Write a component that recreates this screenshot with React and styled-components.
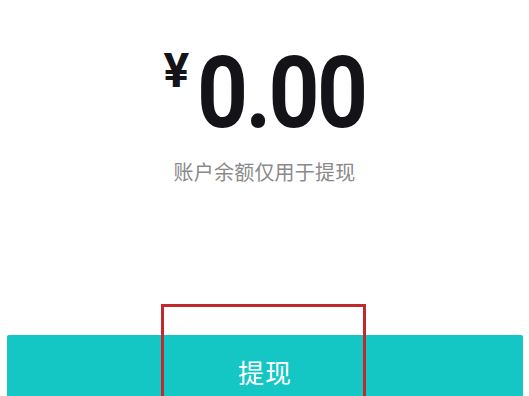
import React from 'react';
import styled, { createGlobalStyle } from 'styled-components';

const GlobalStyle = createGlobalStyle`
  html, body {
    margin: 0;
    padding: 0;
    background: #ffffff;
    overflow: hidden;
  }
  body {
    font-family: "Noto Sans CJK SC", "Noto Sans", sans-serif;
  }
`;

const Page = styled.div`
  width: 529px;
  height: 396px;
  display: flex;
  flex-direction: column;
  align-items: center;
  padding-top: 43px;
  box-sizing: border-box;
`;

const AmountRow = styled.div`
  display: flex;
  align-items: flex-start;
  color: #141418;
  font-family: Roboto, "Liberation Sans", sans-serif;
  font-weight: 700;
`;

const Currency = styled.span`
  font-size: 48px;
  line-height: 1;
  margin-top: 4px;
  margin-right: 8px;
`;

const Amount = styled.span`
  display: inline-block;
  font-size: 100px;
  line-height: 1;
  letter-spacing: -3px;
  transform: scaleX(0.89);
  transform-origin: left center;
  margin-right: -21px;
`;

const Caption = styled.div`
  margin-top: 19px;
  font-size: 20px;
  line-height: 20px;
  color: #8a8a8a;
  letter-spacing: 0.2px;
`;

const ButtonArea = styled.div`
  position: relative;
  align-self: stretch;
  margin: auto 6px 0 7px;
`;

const WithdrawButton = styled.button`
  width: 100%;
  height: 61px;
  border: none;
  border-radius: 2px 2px 0 0;
  background: #14c6c4;
  color: #ffffff;
  font-family: "Noto Sans CJK SC", sans-serif;
  font-size: 26px;
  line-height: 48px;
  letter-spacing: 1px;
  display: flex;
  align-items: flex-start;
  justify-content: center;
  padding: 13px 0 0;
  box-sizing: border-box;
`;

const Highlight = styled.div`
  position: absolute;
  left: 154px;
  top: -31px;
  bottom: 0;
  width: 205px;
  border: 3px solid #bf2a2e;
  border-bottom: none;
  box-sizing: border-box;
  pointer-events: none;
`;

export default function App() {
  return (
    <>
      <GlobalStyle />
      <Page>
        <AmountRow>
          <Currency>¥</Currency>
          <Amount>0.00</Amount>
        </AmountRow>
        <Caption>账户余额仅用于提现</Caption>
        <ButtonArea>
          <WithdrawButton>提现</WithdrawButton>
          <Highlight />
        </ButtonArea>
      </Page>
    </>
  );
}
